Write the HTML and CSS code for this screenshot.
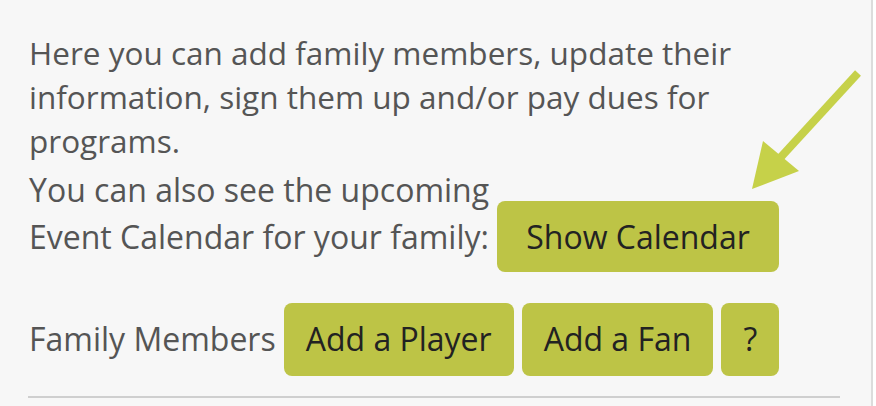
FILE: index.html
```html
<!DOCTYPE html>
<html lang="en">
<head>
  <meta charset="UTF-8">
  <title>Family Members</title>
  <link rel="stylesheet" href="styles.css">
</head>
<body>

<div class="family-box">
  <p class="intro">Here you can add family members, update their information, sign them up and/or pay dues for programs.</p>

  <p class="calendar">You can also see the upcoming<br/>Event Calendar for your family: <a href="#" class="btn btn-wide">Show Calendar</a></p>

  <div class="members-row">
    <span class="members-label">Family Members</span>
    <a href="#" class="btn">Add a Player</a>
    <a href="#" class="btn">Add a Fan</a>
    <a href="#" class="btn btn-help">?</a>
  </div>

  <hr class="divider" />

  <svg class="pointer" width="136" height="140" viewBox="740 60 136 140">
    <line x1="858" y1="73" x2="780" y2="158" stroke="#c6d149" stroke-width="8" />
    <polygon points="752,189 763,141 799,171" fill="#c6d149" />
  </svg>
</div>

</body>
</html>
```

FILE: styles.css
```css
body {
  margin: 0;
  background: #fff;
  font-family: "Open Sans", Arial, sans-serif;
}
.family-box {
  position: relative;
  box-sizing: border-box;
  width: 873px;
  height: 406px;
  overflow: hidden;
  padding: 31px 31px 0 29px;
  background: #f7f7f7;
  border-right: 2px solid #dcdcdc;
  color: #555;
  font-size: 32px;
  line-height: 44px;
}
p {
  margin: 0;
}
.intro {
  font-size: 31.5px;
}
.calendar {
  margin-top: 3px;
  line-height: 47px;
}
.btn {
  display: inline-block;
  padding: 14px 22px 15px;
  background-color: #bdc446;
  color: #222;
  text-decoration: none;
  border-radius: 8px;
}
.calendar .btn {
  display: inline;
  padding: 14px 29px;
}
.btn-help {
  width: 58px;
  padding-left: 0;
  padding-right: 0;
  text-align: center;
}
.members-row {
  display: flex;
  align-items: baseline;
  gap: 8px;
  margin-top: 43px;
}
.divider {
  margin: 20px 0 0 -1px;
  border: none;
  border-top: 2px solid #cfcfcf;
}
.pointer {
  position: absolute;
  left: 740px;
  top: 60px;
}
```
